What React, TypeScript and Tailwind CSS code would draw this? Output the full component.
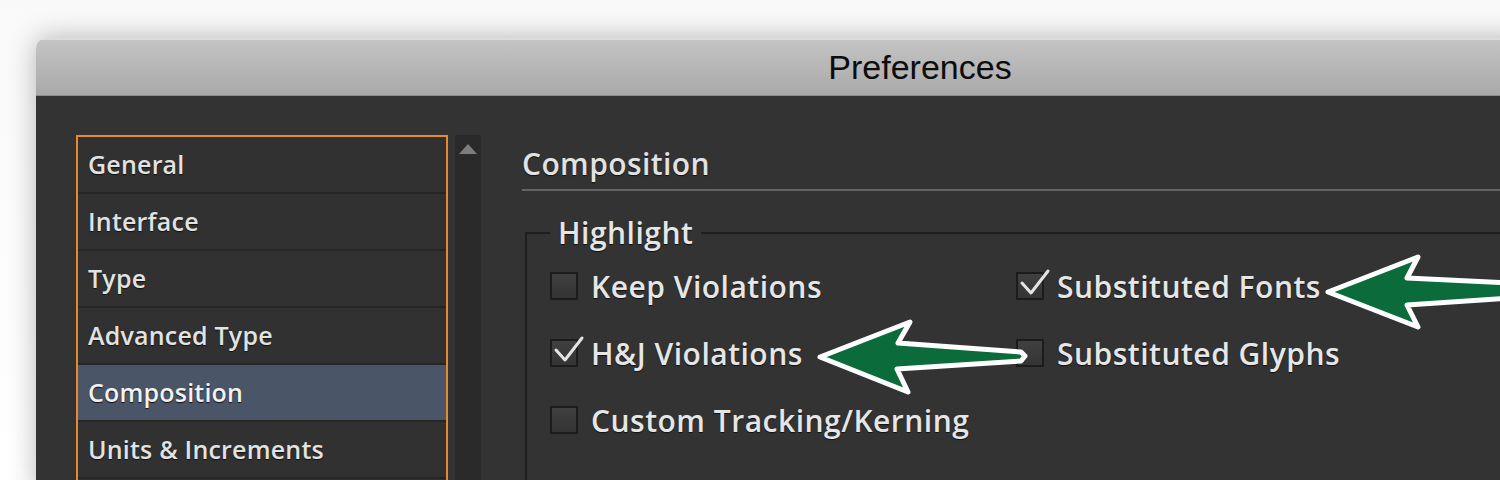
import React from "react";

const sections = [
  "General",
  "Interface",
  "Type",
  "Advanced Type",
  "Composition",
  "Units & Increments",
  "",
];

const uiFont = { fontFamily: '"Open Sans", "Noto Sans", sans-serif' };

const Checkbox: React.FC<{ checked?: boolean }> = ({ checked }) => (
  <div className="relative h-[28px] w-[28px] shrink-0 border-2 border-[#1c1c1c] bg-gradient-to-b from-[#404040] to-[#343434]">
    {checked && (
      <svg
        className="absolute left-[1px] top-[-4px] overflow-visible"
        width="30"
        height="28"
        viewBox="0 0 30 28"
      >
        <path
          d="M3 13 L12 23 L29 1"
          fill="none"
          stroke="#e4e4e4"
          strokeWidth="3"
          strokeLinecap="round"
          strokeLinejoin="round"
        />
      </svg>
    )}
  </div>
);

const Option: React.FC<{ label: string; checked?: boolean }> = ({ label, checked }) => (
  <div className="flex h-[40px] items-center gap-[13px]">
    <Checkbox checked={checked} />
    <span className="whitespace-nowrap text-[30px] font-semibold tracking-[0.5px] text-[#e6e6e6] [text-shadow:0_1px_1px_#111]">
      {label}
    </span>
  </div>
);

const App: React.FC = () => {
  return (
    <div className="relative h-[480px] w-[1500px] overflow-hidden bg-gradient-to-b from-[#f9f9f9] to-[#ffffff] pl-[36px] pt-[38px]">
      <div className="w-[1768px] overflow-hidden rounded-t-[10px] shadow-[0_0_28px_rgba(0,0,0,0.28)]">
        {/* title bar */}
        <div className="flex h-[58px] items-center justify-center border-t-2 border-b border-t-[#dcdcdc] border-b-[#8c8c8c] bg-gradient-to-b from-[#c4c4c4] to-[#a9a9a9]">
          <span
            className="text-[34px] text-[#0c0c0c]"
            style={{ fontFamily: '"Liberation Sans", Arial, sans-serif' }}
          >
            Preferences
          </span>
        </div>

        {/* body */}
        <div className="flex h-[400px] bg-[#333333] pl-[40px] pt-[39px]" style={uiFont}>
          {/* section list */}
          <div className="h-[400px] w-[372px] border-2 border-[#e58b2e] bg-[#313131]">
            {sections.map((s, i) => (
              <div
                key={i}
                className={`flex h-[57px] items-center border-b-2 border-[#262626] pl-[10px] text-[25px] font-semibold tracking-[0.2px] [text-shadow:0_1px_1px_#111] ${
                  s === "Composition" ? "bg-[#4a5567] text-[#f2f2f2]" : "text-[#e2e2e2]"
                }`}
              >
                {s}
              </div>
            ))}
          </div>

          {/* scrollbar */}
          <div className="ml-[7px] flex h-[400px] w-[26px] justify-center border border-[#292929] bg-[#2a2a2a] pt-[8px]">
            <div className="h-0 w-0 border-x-[9px] border-b-[10px] border-x-transparent border-b-[#7d7d7d]" />
          </div>

          {/* content panel */}
          <div className="ml-[41px] flex-1 pt-[9px]">
            <div className="border-b-2 border-[#646464] pb-[5px] text-[30px] font-semibold leading-[40px] tracking-[0.4px] text-[#e2e2e2] [text-shadow:0_1px_1px_#111]">
              Composition
            </div>

            <fieldset className="ml-[3px] mt-[24px] h-[300px] border-2 border-[#1e1e1e] pl-[23px]">
              <legend className="px-[8px] text-[30px] font-semibold leading-[36px] tracking-[0.5px] text-[#e6e6e6] [text-shadow:0_1px_1px_#111]">
                Highlight
              </legend>
              <div className="mt-[15px] grid grid-cols-[466px_auto] gap-y-[27px]">
                <Option label="Keep Violations" />
                <Option label="Substituted Fonts" checked />
                <Option label="H&J Violations" checked />
                <Option label="Substituted Glyphs" />
                <Option label="Custom Tracking/Kerning" />
              </div>
            </fieldset>
          </div>
        </div>
      </div>

      {/* annotation arrows */}
      <svg className="pointer-events-none absolute left-0 top-0" width="1500" height="480">
        <polygon
          points="820,357 910,322 898,343 1021,352 1025,356 1021,361 897,369 908,392"
          fill="#0b6b3a"
          stroke="#ffffff"
          strokeWidth="5"
          strokeLinejoin="round"
        />
        <polygon
          points="1328,292 1418,257 1407,278 1512,283 1512,298 1407,305 1418,327"
          fill="#0b6b3a"
          stroke="#ffffff"
          strokeWidth="5"
          strokeLinejoin="round"
        />
      </svg>
    </div>
  );
};

export default App;
